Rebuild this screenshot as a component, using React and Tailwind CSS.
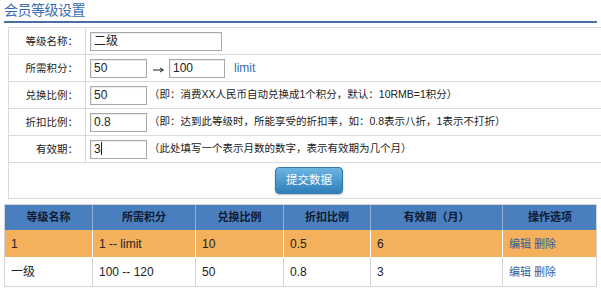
import React from "react";

const F = { fontFamily: '"Liberation Sans", "Noto Sans CJK SC", sans-serif' };

function Row({ label, children }) {
  return (
    <div className="flex h-[27px] border-b border-[#dadada]">
      <div className="w-[77px] shrink-0 border-r border-[#dadada] text-right pr-[7px] leading-[26px] text-[10.5px] text-[#222]">
        {label}
      </div>
      <div className="flex items-center pl-[4px] gap-0 text-[10.5px] text-[#222]">{children}</div>
    </div>
  );
}

function Input({ w, value, caret }) {
  return (
    <div
      className={`${w} h-[19px] border border-[#a9a9a9] bg-white text-[12px] leading-[17px] pl-[3px] text-[#222] shadow-[inset_1px_1px_1px_rgba(0,0,0,0.08)]`}
    >
      {value}
      {caret && <span className="inline-block w-[1px] h-[13px] bg-[#222] align-middle -mt-[2px]" />}
    </div>
  );
}

export default function App() {
  const cols = ["w-[88px]", "w-[103px]", "w-[88px]", "w-[87px]", "w-[132px]", "w-[94px]"];
  const head = ["等级名称", "所需积分", "兑换比例", "折扣比例", "有效期（月）", "操作选项"];
  const rows = [
    { bg: "bg-[#f4b05a]", d: ["1", "1 -- limit", "10", "0.5", "6"] },
    { bg: "bg-white", d: ["一级", "100 -- 120", "50", "0.8", "3"] },
  ];
  return (
    <div style={F} className="w-[601px] h-[290px] bg-white overflow-hidden">
      <div className="pl-[4px] pt-[1px] h-[21px] text-[14px] leading-[18px] text-[#3a6cb0] tracking-[-0.5px]">
        会员等级设置
      </div>
      <div className="ml-[4px] w-[593px] h-[2px] bg-[#4a6ea6]" />
      <div className="ml-[8px] mt-[4px] w-[600px] border-t border-l border-[#dadada]">
        <Row label="等级名称：">
          <Input w="w-[132px]" value="二级" />
        </Row>
        <Row label="所需积分：">
          <Input w="w-[57px]" value="50" />
          <svg width="22" height="10" viewBox="0 0 22 10" className="mt-[4px]">
            <line x1="6" y1="5" x2="16" y2="5" stroke="#222" strokeWidth="1" />
            <path d="M13 3 L16.5 5 L13 7" fill="none" stroke="#222" strokeWidth="1" />
          </svg>
          <Input w="w-[56px]" value="100" />
          <span className="ml-[9px] text-[#3a6cb0] text-[12px]">limit</span>
        </Row>
        <Row label="兑换比例：">
          <Input w="w-[57px]" value="50" />
          <span className="ml-[2px]">（即：消费XX人民币自动兑换成1个积分，默认：10RMB=1积分）</span>
        </Row>
        <Row label="折扣比例：">
          <Input w="w-[57px]" value="0.8" />
          <span className="ml-[2px]">（即：达到此等级时，所能享受的折扣率，如：0.8表示八折，1表示不打折）</span>
        </Row>
        <Row label="有效期：">
          <Input w="w-[57px]" value="3" caret />
          <span className="ml-[2px]">（此处填写一个表示月数的数字，表示有效期为几个月）</span>
        </Row>
        <div className="h-[36px] border-b border-[#dadada] flex items-center">
          <div className="ml-[266px] w-[68px] h-[27px] rounded-[4px] border border-[#2f78ad] bg-gradient-to-b from-[#6cb6e2] to-[#2d7fb9] text-white text-[11.5px] leading-[25px] text-center shadow-[0_1px_2px_rgba(0,0,0,0.25)]">
            提交数据
          </div>
        </div>
      </div>
      <div className="ml-[4px] mt-[5px] w-[593px] border border-[#d4d4d4]">
        <div className="flex h-[25px] bg-[#4a7fbf]">
          {head.map((h, i) => (
            <div
              key={h}
              className={`${cols[i]} shrink-0 text-center text-[11px] font-bold leading-[25px] text-[#101a30] ${i < 5 ? "border-r border-[#8db0da]" : ""}`}
            >
              {h}
            </div>
          ))}
        </div>
        {rows.map((r, ri) => (
          <div key={ri} className={`flex h-[28px] ${r.bg} ${ri === 0 ? "border-b border-white" : ""}`}>
            {r.d.map((c, i) => (
              <div
                key={i}
                className={`${cols[i]} shrink-0 pl-[6px] text-[12px] leading-[28px] text-[#222] border-r ${ri === 0 ? "border-white" : "border-[#d4d4d4]"}`}
              >
                {c}
              </div>
            ))}
            <div className={`${cols[5]} shrink-0 pl-[6px] text-[11px] leading-[28px] text-[#2e5f9e]`}>
              编辑 删除
            </div>
          </div>
        ))}
      </div>
    </div>
  );
}
